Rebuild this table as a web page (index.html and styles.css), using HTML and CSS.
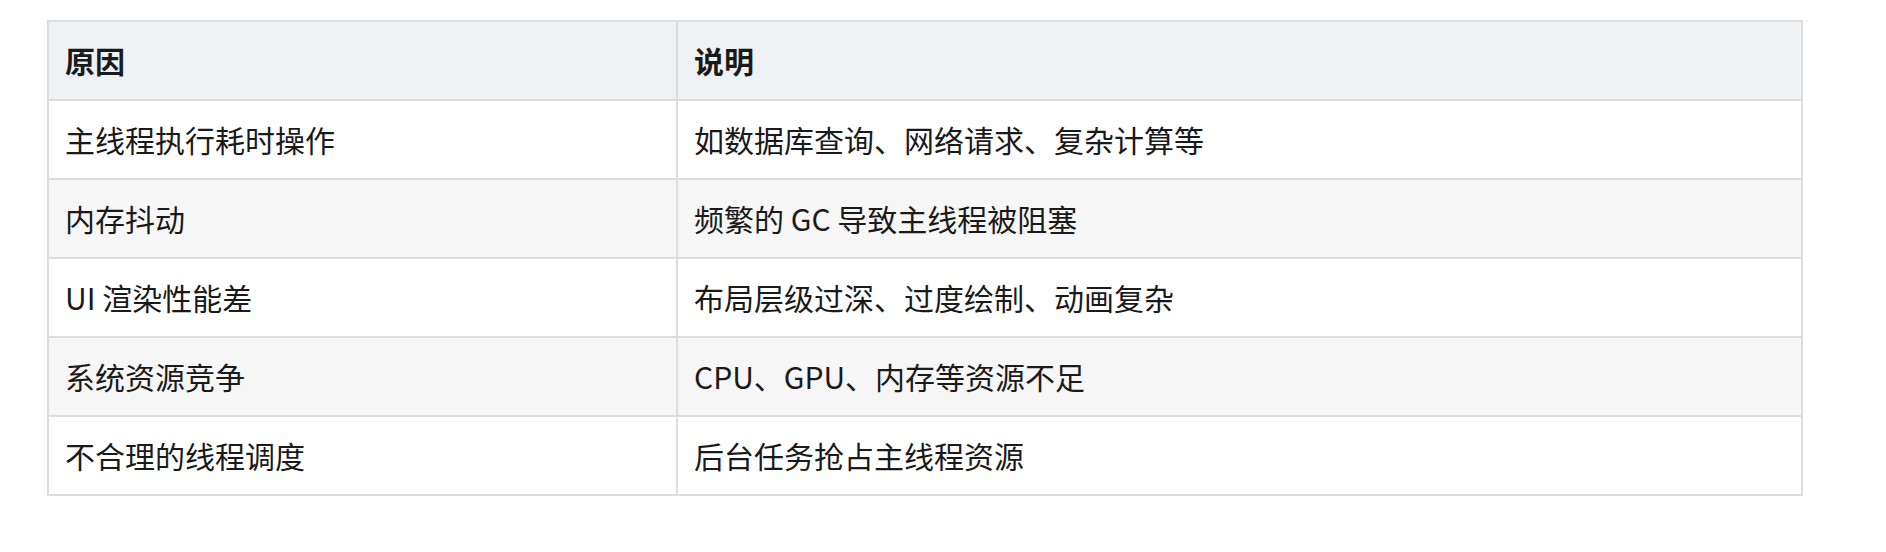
FILE: index.html
```html
<!DOCTYPE html>
<html lang="zh-CN">
<head>
<meta charset="utf-8">
<title>原因说明</title>
<link rel="stylesheet" href="styles.css">
</head>
<body>
<div class="page">
  <table class="reason-table">
    <colgroup>
      <col class="col-reason">
      <col class="col-desc">
    </colgroup>
    <thead>
      <tr><th>原因</th><th>说明</th></tr>
    </thead>
    <tbody>
      <tr><td>主线程执行耗时操作</td><td>如数据库查询、网络请求、复杂计算等</td></tr>
      <tr><td>内存抖动</td><td>频繁的 GC 导致主线程被阻塞</td></tr>
      <tr><td>UI 渲染性能差</td><td>布局层级过深、过度绘制、动画复杂</td></tr>
      <tr><td>系统资源竞争</td><td>CPU、GPU、内存等资源不足</td></tr>
      <tr><td>不合理的线程调度</td><td>后台任务抢占主线程资源</td></tr>
    </tbody>
  </table>
</div>
</body>
</html>
```

FILE: styles.css
```css
html, body {
  margin: 0;
  padding: 0;
  background: #ffffff;
}

.page {
  padding: 20px 0 0 47px;
}

.reason-table {
  border-collapse: collapse;
  table-layout: fixed;
  width: 1756px;
  font-family: "Noto Sans CJK SC", sans-serif;
  font-size: 30px;
  line-height: 1.5;
  color: #1a1a1a;
}

.col-reason {
  width: 629px;
}

.reason-table th,
.reason-table td {
  border: 2px solid #dddddd;
  padding: 16px 16px;
  text-align: left;
  vertical-align: middle;
  white-space: nowrap;
}

.reason-table th {
  background: #eff2f5;
  font-weight: 700;
}

.reason-table tbody tr:nth-child(even) td {
  background: #f6f6f6;
}
```
